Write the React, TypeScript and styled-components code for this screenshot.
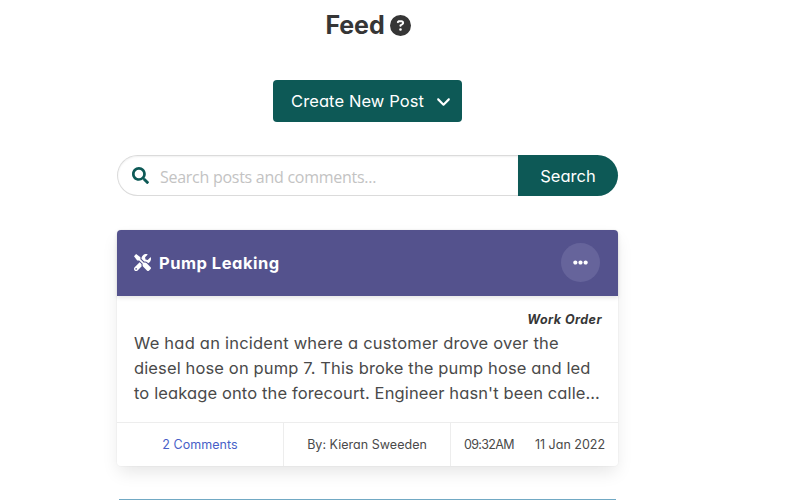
import React from "react";
import styled, { createGlobalStyle } from "styled-components";
import { FaEllipsisH, FaSearch, FaTools } from "react-icons/fa";
import { FaAngleDown, FaCircleQuestion } from "react-icons/fa6";

const Global = createGlobalStyle`
  * { box-sizing: border-box; }
  html, body { margin: 0; background: #fff; height: 500px; overflow: hidden; }
  body {
    font-family: Inter, "Open Sans", sans-serif;
    font-feature-settings: "cv11" 1, "calt" 0;
    color: #4a4a4a;
  }
  button, input { font: inherit; font-feature-settings: inherit; border: 0; margin: 0; padding: 0; }
`;

const Page = styled.main`
  width: 501px;
  margin-left: 117px;
  height: 500px;
  display: flex;
  flex-direction: column;
`;

const Title = styled.h1`
  margin: 9px 0 0;
  padding-left: 1px;
  height: 32px;
  display: flex;
  align-items: center;
  justify-content: center;
  gap: 5px;
  font-size: 25px;
  font-weight: 650;
  line-height: 32px;
  color: #363636;
  svg { width: 21px; height: 21px; margin-top: 1px; }
`;

const Line = styled.span<{ $tracking?: number }>`
  letter-spacing: ${(p) => p.$tracking ?? 0}px;
  white-space: nowrap;
`;

const CreateButton = styled.button`
  align-self: center;
  margin: 39px 0 0;
  width: 189px;
  height: 42px;
  padding: 0 10px 0 18px;
  display: flex;
  align-items: center;
  justify-content: space-between;
  flex: none;
  border-radius: 4px;
  background: #0d5956;
  color: #fff;
  font-size: 16.5px;
  svg { width: 17px; height: 17px; }
`;

const SearchBar = styled.form`
  display: flex;
  flex: none;
  margin-top: 33px;
  height: 41px;
`;

const Field = styled.label`
  flex: 1;
  display: flex;
  align-items: center;
  padding-left: 14px;
  gap: 11px;
  border: 1px solid #dbdbdb;
  border-right: 0;
  border-radius: 21px 0 0 21px;
  box-shadow: inset 0 1px 2px rgba(10, 10, 10, 0.06);
  svg { width: 17px; height: 17px; color: #0d5956; flex: none; }
`;

const Input = styled.input`
  flex: 1;
  min-width: 0;
  margin-top: 3px;
  background: transparent;
  font-family: "Open Sans", sans-serif;
  font-size: 16px;
  letter-spacing: -0.27px;
  &::placeholder { color: #c3c3c3; opacity: 1; }
`;

const SearchButton = styled.button`
  width: 100px;
  border-radius: 0 21px 21px 0;
  background: #0d5956;
  color: #fff;
  font-size: 16.5px;
`;

const Card = styled.article`
  flex: none;
  margin-top: 33.5px;
  height: 236.5px;
  display: flex;
  flex-direction: column;
  border-radius: 4px;
  background: #fff;
  box-shadow: 0 8px 17px -2px rgba(10, 10, 10, 0.1), 0 0 0 1px rgba(10, 10, 10, 0.02);
`;

const CardHeader = styled.header`
  height: 66.5px;
  flex: none;
  display: flex;
  align-items: center;
  padding: 0 18px 0 17px;
  border-radius: 4px 4px 0 0;
  background: #54528d;
  box-shadow: 0 2px 4px rgba(10, 10, 10, 0.1);
  color: #fff;
  > svg { width: 17px; height: 17px; }
`;

const CardTitle = styled.h2`
  flex: 1;
  margin: 0 0 0 8px;
  font-size: 16.5px;
  font-weight: 750;
`;

const MenuButton = styled.button`
  width: 39px;
  height: 39px;
  display: grid;
  place-items: center;
  border-radius: 50%;
  background: #66649b;
  color: #fff;
  svg { width: 15px; height: 15px; }
`;

const CardBody = styled.div`
  height: 126px;
  padding: 13px 16px 0 17px;
`;

const Tag = styled.div`
  height: 22px;
  line-height: 22px;
  text-align: right;
  font-size: 12.5px;
  font-weight: 700;
  font-style: italic;
  color: #363636;
`;

const Message = styled.p`
  margin: 0;
  font-size: 16.5px;
  line-height: 25px;
  ${Line} { display: block; }
`;

const CardFooter = styled.footer`
  flex: 1;
  display: grid;
  grid-template-columns: 166px 167px 1fr;
  border-top: 1px solid #ededed;
  font-size: 12.5px;
`;

const FooterCell = styled.div<{ $link?: boolean }>`
  display: flex;
  align-items: center;
  justify-content: center;
  gap: 21px;
  padding-bottom: 1px;
  color: ${(p) => (p.$link ? "#485fc7" : "#4a4a4a")};
  & + & { border-left: 1px solid #ededed; }
`;

const NextCard = styled.div`
  flex: none;
  margin: 33px 2px 0;
  height: 1px;
  background: #71a9c4;
`;

export default function App() {
  return (
    <>
      <Global />
      <Page>
        <Title><Line $tracking={-0.1}>Feed</Line><FaCircleQuestion /></Title>
        <CreateButton><Line $tracking={0.1}>Create New Post</Line><FaAngleDown /></CreateButton>
        <SearchBar>
          <Field><FaSearch /><Input placeholder="Search posts and comments..." /></Field>
          <SearchButton type="button"><Line>Search</Line></SearchButton>
        </SearchBar>
        <Card>
          <CardHeader>
            <FaTools />
            <CardTitle><Line $tracking={0.5}>Pump Leaking</Line></CardTitle>
            <MenuButton aria-label="Options"><FaEllipsisH /></MenuButton>
          </CardHeader>
          <CardBody>
            <Tag><Line $tracking={0.45}>Work Order</Line></Tag>
            <Message>
              <Line $tracking={0.22}>We had an incident where a customer drove over the</Line>
              <Line $tracking={0.13}>diesel hose on pump 7. This broke the pump hose and led</Line>
              <Line $tracking={0.12}>to leakage onto the forecourt. Engineer hasn't been calle…</Line>
            </Message>
          </CardBody>
          <CardFooter>
            <FooterCell $link><Line $tracking={0.05}>2 Comments</Line></FooterCell>
            <FooterCell><Line $tracking={0.03}>By: Kieran Sweeden</Line></FooterCell>
            <FooterCell><Line $tracking={-0.65}>09:32AM</Line><Line>11 Jan 2022</Line></FooterCell>
          </CardFooter>
        </Card>
        <NextCard />
      </Page>
    </>
  );
}
